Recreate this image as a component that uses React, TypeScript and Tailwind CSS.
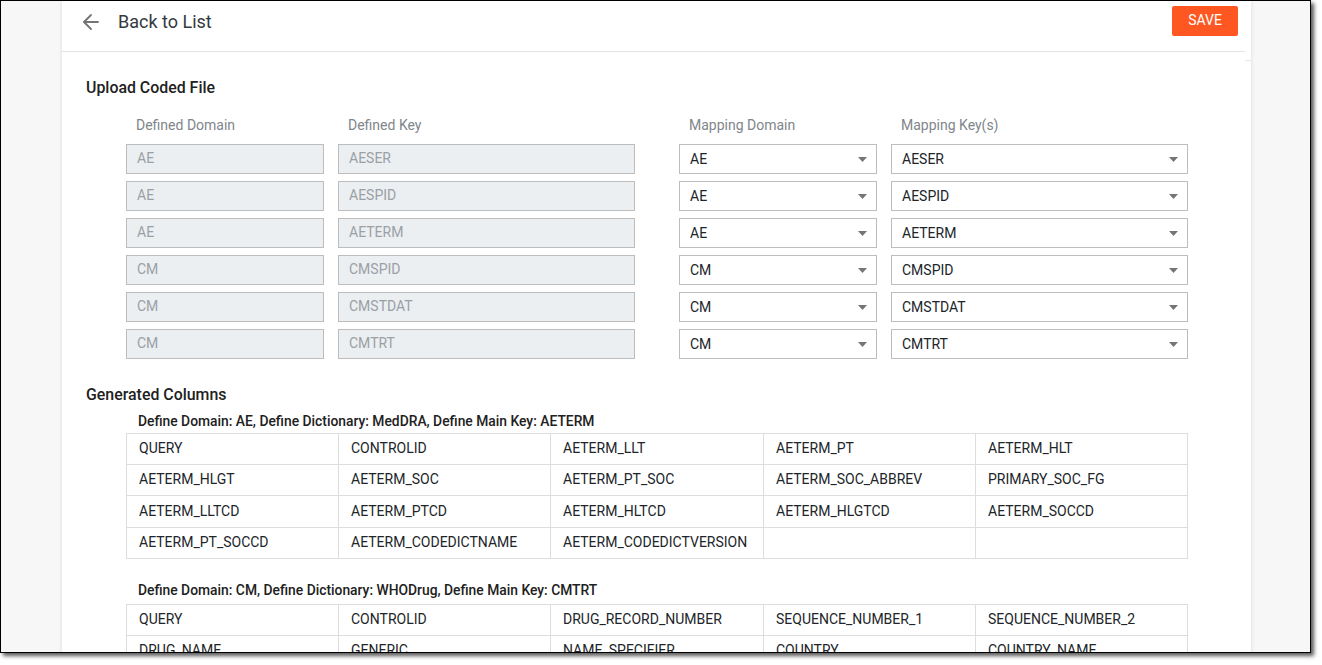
import React from "react";
import { ArrowLeft } from "lucide-react";

const rows = [
  ["AE", "AESER"],
  ["AE", "AESPID"],
  ["AE", "AETERM"],
  ["CM", "CMSPID"],
  ["CM", "CMSTDAT"],
  ["CM", "CMTRT"],
];

const aeColumns = [
  "QUERY", "CONTROLID", "AETERM_LLT", "AETERM_PT", "AETERM_HLT",
  "AETERM_HLGT", "AETERM_SOC", "AETERM_PT_SOC", "AETERM_SOC_ABBREV", "PRIMARY_SOC_FG",
  "AETERM_LLTCD", "AETERM_PTCD", "AETERM_HLTCD", "AETERM_HLGTCD", "AETERM_SOCCD",
  "AETERM_PT_SOCCD", "AETERM_CODEDICTNAME", "AETERM_CODEDICTVERSION", "", "",
];

const cmColumns = [
  "QUERY", "CONTROLID", "DRUG_RECORD_NUMBER", "SEQUENCE_NUMBER_1", "SEQUENCE_NUMBER_2",
  "DRUG_NAME", "GENERIC", "NAME_SPECIFIER", "COUNTRY", "COUNTRY_NAME",
];

function Disabled({ value, className }: { value: string; className: string }) {
  return (
    <div className={`h-[30px] flex items-center pl-[10px] pb-[2px] border border-[#bdbdbd] bg-[#eceff1] text-[#9aa0a6] text-sm ${className}`}>
      {value}
    </div>
  );
}

function Select({ value, className }: { value: string; className: string }) {
  return (
    <div className={`h-[30px] flex items-center justify-between pl-[10px] pr-[9px] border border-[#bdbdbd] bg-white text-[#212529] text-sm ${className}`}>
      <span>{value}</span>
      <svg width="9" height="5" viewBox="0 0 9 5" className="mt-px">
        <path d="M0 0h9L4.5 5z" fill="#757575" />
      </svg>
    </div>
  );
}

function ColumnTable({ items, rowsClass }: { items: string[]; rowsClass: string }) {
  return (
    <div className={`grid grid-cols-[212px_212px_213px_212px_212px] w-[1062px] ml-[64px] border-t border-l border-[#dddddd] ${rowsClass}`}>
      {items.map((item, i) => (
        <div
          key={i}
          className="flex items-center pl-3 pb-[2px] border-r border-b border-[#dddddd] text-[#212529] text-sm whitespace-nowrap"
        >
          {item}
        </div>
      ))}
    </div>
  );
}

export default function App() {
  return (
    <div className="w-[1322px] h-[665px] bg-white overflow-hidden" style={{ fontFamily: "Roboto, sans-serif" }}>
      <div className="w-[1311px] h-[653px] border border-black bg-[#f7f7f7] overflow-hidden shadow-[3px_3px_4px_rgba(0,0,0,0.65)] pl-[61px]">
        <div className="w-[1189px] h-[800px] bg-white shadow-[0_0_4px_rgba(0,0,0,0.12)]">
          <div className="flex items-start">
            <div className="w-[1183px] h-[51px] border-b border-[#e3e3e3] flex items-center justify-between pl-[17px] pr-[7px] pb-[10px]">
              <div className="flex items-center mt-[2px]">
                <ArrowLeft size={24} strokeWidth={1.8} color="#757575" />
                <span className="ml-[15px] text-lg text-[#343a40]">Back to List</span>
              </div>
              <button className="w-[66px] h-[30px] pb-[2px] rounded-[2px] bg-[#ff5722] text-white text-sm">SAVE</button>
            </div>
            <div className="w-[6px] h-[60px] border-b border-[#e3e3e3]" />
          </div>

          <h2 className="mt-[17px] ml-[24px] text-[15.9px] leading-5 font-medium text-[#212121]">Upload Coded File</h2>

          <div className="mt-[17px] ml-[64px]">
            <div className="flex h-5 text-sm text-[#80868b] leading-5">
              <span className="w-[212px] pl-[10px]">Defined Domain</span>
              <span className="w-[341px] pl-[10px]">Defined Key</span>
              <span className="w-[212px] pl-[10px]">Mapping Domain</span>
              <span className="pl-[10px]">Mapping Key(s)</span>
            </div>
            <div className="mt-[9px] flex flex-col gap-[7px]">
              {rows.map(([domain, key]) => (
                <div key={key} className="flex">
                  <Disabled value={domain} className="w-[198px]" />
                  <Disabled value={key} className="w-[297px] ml-[14px]" />
                  <Select value={domain} className="w-[198px] ml-[44px]" />
                  <Select value={key} className="w-[297px] ml-[14px]" />
                </div>
              ))}
            </div>
          </div>

          <h2 className="mt-[26px] ml-[24px] text-[15.9px] leading-5 font-medium text-[#212121]">Generated Columns</h2>
          <div className="mt-[6px] ml-[76px] text-[13.85px] leading-5 font-medium text-[#212121] whitespace-nowrap">
            Define Domain: AE, Define Dictionary: MedDRA, Define Main Key: AETERM
          </div>
          <div className="mt-[2px]">
            <ColumnTable items={aeColumns} rowsClass="grid-rows-[31px_31px_32px_31px]" />
          </div>
          <div className="mt-[21px] ml-[76px] text-[13.85px] leading-5 font-medium text-[#212121] whitespace-nowrap">
            Define Domain: CM, Define Dictionary: WHODrug, Define Main Key: CMTRT
          </div>
          <div className="mt-[4px]">
            <ColumnTable items={cmColumns} rowsClass="grid-rows-[31px_31px]" />
          </div>
        </div>
      </div>
    </div>
  );
}
